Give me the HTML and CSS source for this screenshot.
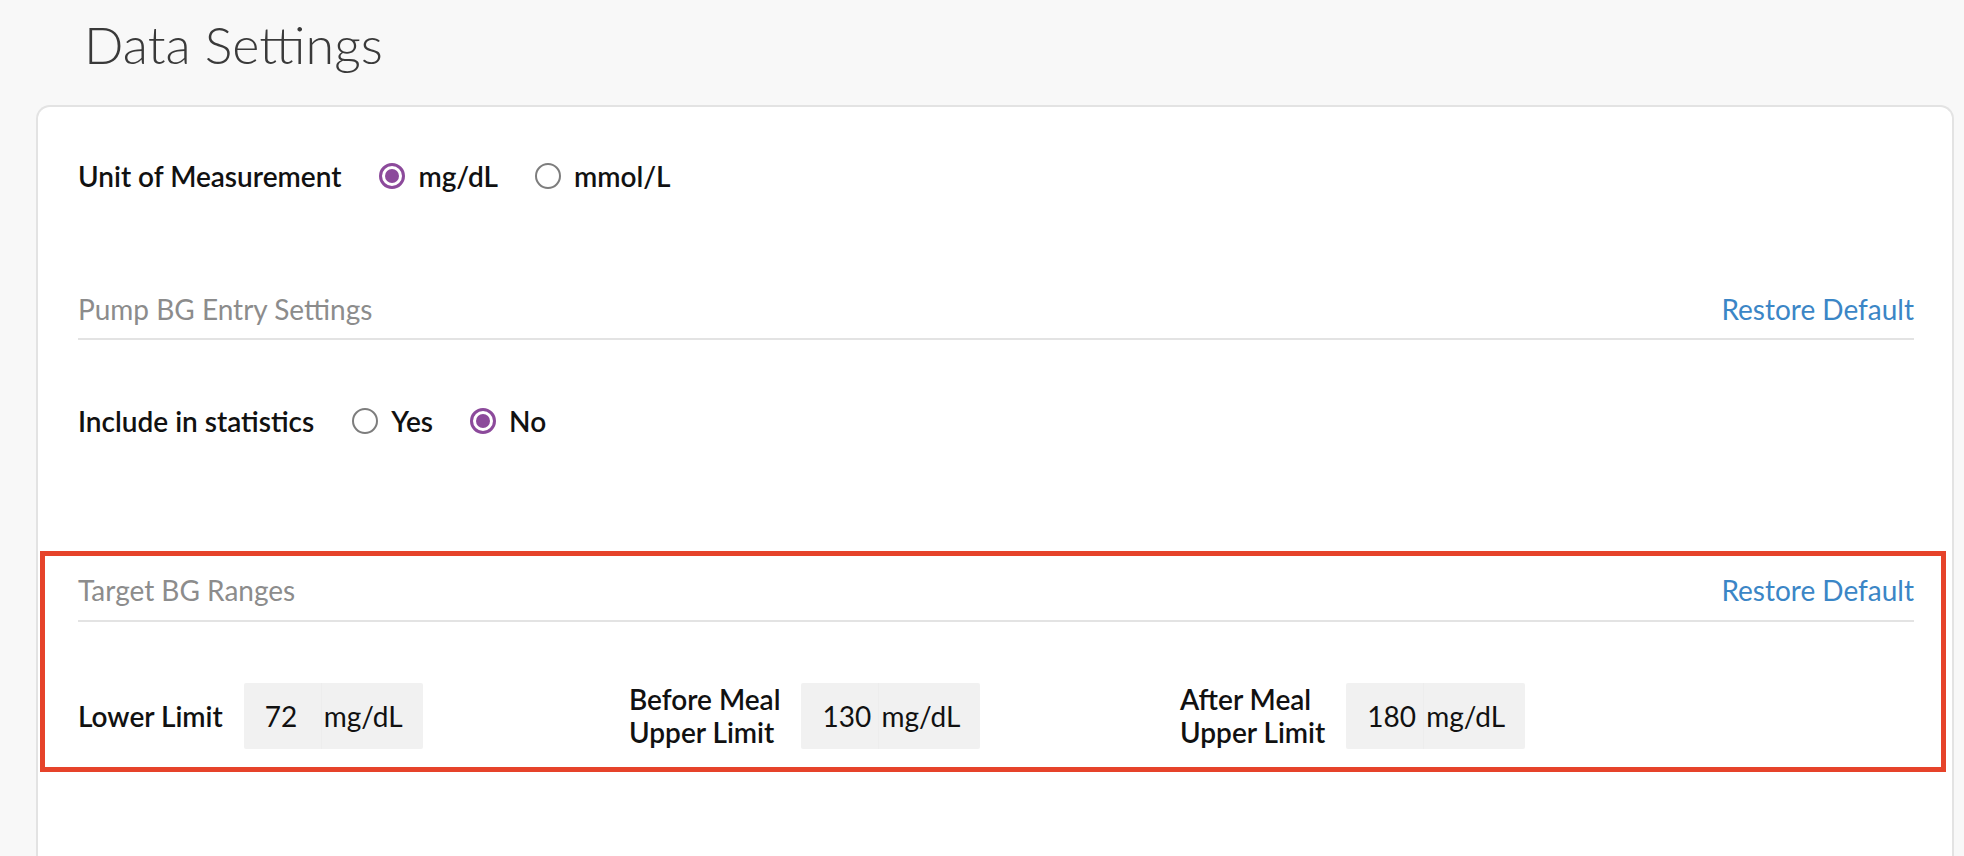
FILE: index.html
```html
<!DOCTYPE html>
<html lang="en">
<head>
<meta charset="utf-8">
<title>Data Settings</title>
<link rel="stylesheet" href="styles.css">
</head>
<body>
<div class="page">
  <h1 class="title">Data Settings</h1>
  <div class="card">
    <div class="option-row row-unit">
      <span class="row-label">Unit of Measurement</span>
      <div class="choices">
        <label class="choice"><span class="radio checked"></span><span class="choice-text">mg/dL</span></label>
        <label class="choice"><span class="radio"></span><span class="choice-text">mmol/L</span></label>
      </div>
    </div>

    <div class="section-head head-pump">
      <span class="section-title">Pump BG Entry Settings</span>
      <a class="restore">Restore Default</a>
    </div>

    <div class="option-row row-include">
      <span class="row-label">Include in statistics</span>
      <div class="choices">
        <label class="choice"><span class="radio"></span><span class="choice-text">Yes</span></label>
        <label class="choice"><span class="radio checked"></span><span class="choice-text">No</span></label>
      </div>
    </div>

    <section class="target">
      <div class="section-head">
        <span class="section-title">Target BG Ranges</span>
        <a class="restore">Restore Default</a>
      </div>
      <div class="limits">
        <div class="limit">
          <span class="limit-label">Lower Limit</span>
          <div class="value-box"><span class="num">72</span><span class="unit">mg/dL</span></div>
        </div>
        <div class="limit">
          <span class="limit-label">Before Meal<br>Upper Limit</span>
          <div class="value-box"><span class="num">130</span><span class="unit">mg/dL</span></div>
        </div>
        <div class="limit">
          <span class="limit-label">After Meal<br>Upper Limit</span>
          <div class="value-box"><span class="num">180</span><span class="unit">mg/dL</span></div>
        </div>
      </div>
    </section>
  </div>
</div>
</body>
</html>
```

FILE: styles.css
```css
* { box-sizing: border-box; }

html, body {
  margin: 0;
  padding: 0;
  background: #f8f8f8;
  font-family: "Lato", "Open Sans", sans-serif;
  color: #111;
  overflow: hidden;
}

.page {
  padding: 0 10px 0 36px;
}

.title {
  margin: 0;
  padding: 13px 0 0 48px;
  font-size: 52px;
  line-height: 62px;
  font-weight: 300;
  color: #3a3a3a;
}

.card {
  margin-top: 30px;
  background: #fff;
  border: 2px solid #e3e3e3;
  border-bottom: none;
  border-radius: 14px 14px 0 0;
  padding: 52px 38px 200px 40px;
}

.option-row {
  display: flex;
  align-items: center;
  font-size: 28px;
  line-height: 34px;
  font-weight: 600;
}

.row-label {
  margin-right: 38px;
}

.choices {
  display: flex;
  align-items: center;
  gap: 37px;
}

.choice {
  display: flex;
  align-items: center;
  gap: 13px;
}

.radio {
  width: 26px;
  height: 26px;
  border-radius: 50%;
  border: 2px solid #7d7d7d;
  display: flex;
  align-items: center;
  justify-content: center;
  background: #fff;
}

.radio.checked {
  border: 3px solid #8c4a9b;
}

.radio.checked::after {
  content: "";
  width: 14px;
  height: 14px;
  border-radius: 50%;
  background: #8c4a9b;
}

.section-head {
  display: flex;
  justify-content: space-between;
  align-items: baseline;
  font-size: 28px;
  line-height: 34px;
  padding-bottom: 12px;
  border-bottom: 2px solid #e3e3e3;
}

.head-pump {
  margin-top: 99px;
}

.section-title {
  color: #8c8c8c;
}

.restore {
  color: #3b86c6;
  cursor: pointer;
}

.row-include {
  margin-top: 64px;
}

.target {
  margin: 113px -32px 0 -38px;
  border: 5px solid #e6432a;
  padding: 17px 27px 18px 33px;
}

.target .section-head {
  padding-bottom: 13px;
}

.limits {
  margin-top: 61px;
  display: grid;
  grid-template-columns: repeat(3, 551px);
}

.limit {
  display: flex;
  align-items: center;
  gap: 21px;
}

.limit-label {
  font-size: 28px;
  line-height: 33px;
  font-weight: 600;
}

.value-box {
  display: flex;
  align-items: center;
  height: 66px;
  background: #f1f1f1;
  border-radius: 2px;
  font-size: 28px;
  line-height: 34px;
}

.num {
  width: 78px;
  padding-left: 21px;
  align-self: stretch;
  display: flex;
  align-items: center;
  border-right: 1px solid #ededed;
}

.unit {
  padding: 0 20px 0 2px;
}
```
